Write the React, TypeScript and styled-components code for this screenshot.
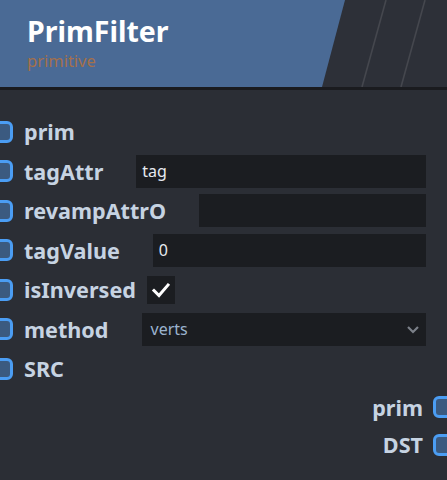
import styled, { createGlobalStyle } from 'styled-components';

const GlobalStyle = createGlobalStyle`
  html, body {
    margin: 0;
    padding: 0;
    background: #2b2e35;
    overflow: hidden;
  }
  * {
    box-sizing: border-box;
  }
`;

type Field =
  | { kind: 'plain' }
  | { kind: 'text'; value: string }
  | { kind: 'check' }
  | { kind: 'select'; value: string };

const inputs: { label: string; field: Field }[] = [
  { label: 'prim', field: { kind: 'plain' } },
  { label: 'tagAttr', field: { kind: 'text', value: 'tag' } },
  { label: 'revampAttrO', field: { kind: 'text', value: '' } },
  { label: 'tagValue', field: { kind: 'text', value: '0' } },
  { label: 'isInversed', field: { kind: 'check' } },
  { label: 'method', field: { kind: 'select', value: 'verts' } },
  { label: 'SRC', field: { kind: 'plain' } },
];

const outputs = ['prim', 'DST'];

const renderField = (field: Field) => {
  switch (field.kind) {
    case 'text':
      return <TextBox>{field.value}</TextBox>;
    case 'check':
      return (
        <CheckBox>
          <svg width="20" height="20" viewBox="0 0 20 20">
            <path d="M3 10.5 L8 15.5 L17 5" fill="none" stroke="#ffffff" strokeWidth="3" strokeLinecap="square" />
          </svg>
        </CheckBox>
      );
    case 'select':
      return (
        <SelectBox>
          <span>{field.value}</span>
          <svg width="14" height="10" viewBox="0 0 14 10">
            <path d="M2 3 L7 8 L12 3" fill="none" stroke="#7c8089" strokeWidth="2.2" />
          </svg>
        </SelectBox>
      );
    default:
      return null;
  }
};

const App = () => {
  return (
    <>
      <GlobalStyle />
      <Node>
        <Header>
          <HeaderArt width="447" height="87" viewBox="0 0 447 87" preserveAspectRatio="none">
            <polygon points="0,0 345,0 322,87 0,87" fill="#4a6a95" />
            <line x1="386" y1="0" x2="362" y2="87" stroke="#45474e" strokeWidth="1.6" />
            <line x1="425" y1="0" x2="401" y2="87" stroke="#45474e" strokeWidth="1.6" />
          </HeaderArt>
          <Title>PrimFilter</Title>
          <Subtitle>primitive</Subtitle>
        </Header>
        <Body>
          {inputs.map((row) => (
            <InputRow key={row.label} $check={row.field.kind === 'check'}>
              <Port>
                <Socket />
                <Label>{row.label}</Label>
              </Port>
              {renderField(row.field)}
            </InputRow>
          ))}
          {outputs.map((name) => (
            <OutputRow key={name}>
              <Label>{name}</Label>
              <Socket />
            </OutputRow>
          ))}
        </Body>
      </Node>
    </>
  );
};

export default App;

const Node = styled.div`
  width: 447px;
  height: 480px;
  display: flex;
  flex-direction: column;
  background: #2b2e35;
  font-family: 'Noto Sans', 'Open Sans', sans-serif;
`;

const Header = styled.div`
  position: relative;
  height: 90px;
  flex-shrink: 0;
  background: #2d3038;
  border-bottom: 3px solid #1a1b1f;
  padding: 12px 0 0 27px;
`;

const HeaderArt = styled.svg`
  position: absolute;
  left: 0;
  top: 0;
`;

const Title = styled.div`
  position: relative;
  color: #ffffff;
  font-size: 28.5px;
  font-weight: 700;
  line-height: 38px;
`;

const Subtitle = styled.div`
  position: relative;
  color: #a5704a;
  font-size: 16.5px;
  line-height: 22px;
`;

const Body = styled.div`
  display: flex;
  flex-direction: column;
  padding: 22px 21px 0 0;
`;

const InputRow = styled.div<{ $check: boolean }>`
  height: 39.5px;
  display: flex;
  align-items: center;
  gap: ${(p) => (p.$check ? '11px' : '33px')};
`;

const Port = styled.div`
  display: flex;
  align-items: center;
  gap: 11px;
  margin-left: -7px;
`;

const OutputRow = styled.div`
  height: 37.5px;
  display: flex;
  align-items: center;
  justify-content: flex-end;
  gap: 10px;
  margin-right: -27px;
`;

const Socket = styled.div`
  width: 20px;
  height: 22px;
  flex-shrink: 0;
  border: 3px solid #4b9df3;
  border-radius: 6px;
  background: #3b5a80;
`;

const Label = styled.span`
  color: #c6d3e2;
  font-size: 21.6px;
  font-weight: 700;
  white-space: nowrap;
`;

const FieldBase = styled.div`
  flex: 1;
  height: 33px;
  background: #1b1d21;
  display: flex;
  align-items: center;
`;

const TextBox = styled(FieldBase)`
  padding-left: 6px;
  color: #e6eaf0;
  font-size: 16px;
`;

const SelectBox = styled(FieldBase)`
  padding: 0 6px 0 9px;
  justify-content: space-between;
  color: #9cb4cf;
  font-size: 16px;
`;

const CheckBox = styled.div`
  width: 28px;
  height: 28px;
  background: #1b1d21;
  display: flex;
  align-items: center;
  justify-content: center;
`;
